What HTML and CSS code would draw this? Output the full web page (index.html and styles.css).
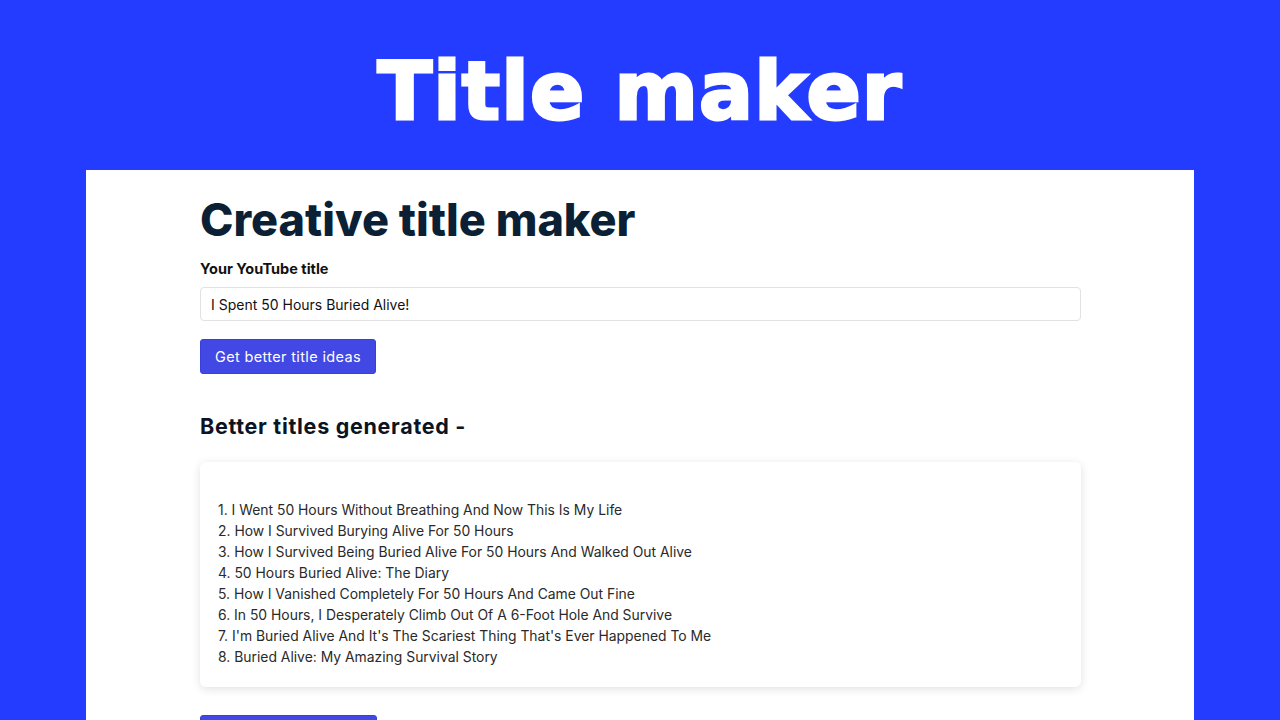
FILE: index.html
```html
<!DOCTYPE html>
<html>
<head>
<meta charset="utf-8">
<link rel="stylesheet" href="styles.css">
</head>
<body>
<header class="hero">
  <h1 class="hero-title">Title maker</h1>
</header>
<main class="panel">
  <div class="content">
    <h2 class="page-title">Creative title maker</h2>
    <label class="field-label">Your YouTube title</label>
    <div class="input">I Spent 50 Hours Buried Alive!</div>
    <button class="btn">Get better title ideas</button>
    <h3 class="section-title">Better titles generated -</h3>
    <div class="result-card">
      <ol class="results">
        <li>1. I Went 50 Hours Without Breathing And Now This Is My Life</li>
        <li>2. How I Survived Burying Alive For 50 Hours</li>
        <li>3. How I Survived Being Buried Alive For 50 Hours And Walked Out Alive</li>
        <li>4. 50 Hours Buried Alive: The Diary</li>
        <li>5. How I Vanished Completely For 50 Hours And Came Out Fine</li>
        <li>6. In 50 Hours, I Desperately Climb Out Of A 6-Foot Hole And Survive</li>
        <li>7. I'm Buried Alive And It's The Scariest Thing That's Ever Happened To Me</li>
        <li>8. Buried Alive: My Amazing Survival Story</li>
      </ol>
    </div>
    <button class="btn btn-bottom">Copy all titles</button>
  </div>
</main>
</body>
</html>
```
FILE: styles.css
```css
html, body {
  margin: 0;
  padding: 0;
  height: 720px;
  overflow: hidden;
}
body {
  background: #243cff;
  font-family: Inter, "Liberation Sans", sans-serif;
}
.hero {
  height: 170px;
  display: flex;
  justify-content: center;
  align-items: flex-start;
}
.hero-title {
  margin: 42px 0 0;
  color: #fff;
  font-family: "DejaVu Sans", sans-serif;
  font-size: 80px;
  font-weight: 700;
  letter-spacing: 1.2px;
  line-height: 100px;
  -webkit-text-stroke: 3px #fff;
}
.panel {
  background: #fff;
  margin: 0 86px;
  height: 560px;
}
.content {
  margin: 0 113px 0 114px;
  padding-top: 22px;
  display: flex;
  flex-direction: column;
  align-items: flex-start;
}
.page-title {
  margin: 0;
  font-size: 45px;
  font-weight: 800;
  color: #0b1f35;
  line-height: 56px;
  letter-spacing: 0;
}
.field-label {
  margin-top: 11px;
  font-size: 14.5px;
  font-weight: 700;
  color: #111;
  line-height: 20px;
}
.input {
  margin-top: 8px;
  align-self: stretch;
  height: 34px;
  box-sizing: border-box;
  border: 1px solid #e2e2e2;
  border-radius: 4px;
  padding: 0 10px;
  display: flex;
  align-items: center;
  font-size: 14px;
  color: #111;
}
.btn {
  margin-top: 18px;
  background: #4248e4;
  color: #fff;
  border: 1px solid #3a40d8;
  border-radius: 3px;
  height: 35px;
  padding: 0 14px;
  font-family: inherit;
  font-size: 14.5px;
  letter-spacing: 0.35px;
}
.section-title {
  margin: 38px 0 0;
  font-size: 21.5px;
  font-weight: 700;
  color: #0b1423;
  line-height: 28px;
  letter-spacing: 0.7px;
}
.result-card {
  margin-top: 22px;
  align-self: stretch;
  border-radius: 6px;
  box-shadow: 0 2px 10px rgba(0, 0, 0, 0.12);
  padding: 38px 18px 16px;
  height: 225px;
  box-sizing: border-box;
}
.results {
  list-style: none;
  margin: 0;
  padding: 0;
  font-size: 13.9px;
  line-height: 21px;
  color: #2a2a2a;
}
.btn-bottom {
  margin-top: 28px;
  width: 177px;
}
```
